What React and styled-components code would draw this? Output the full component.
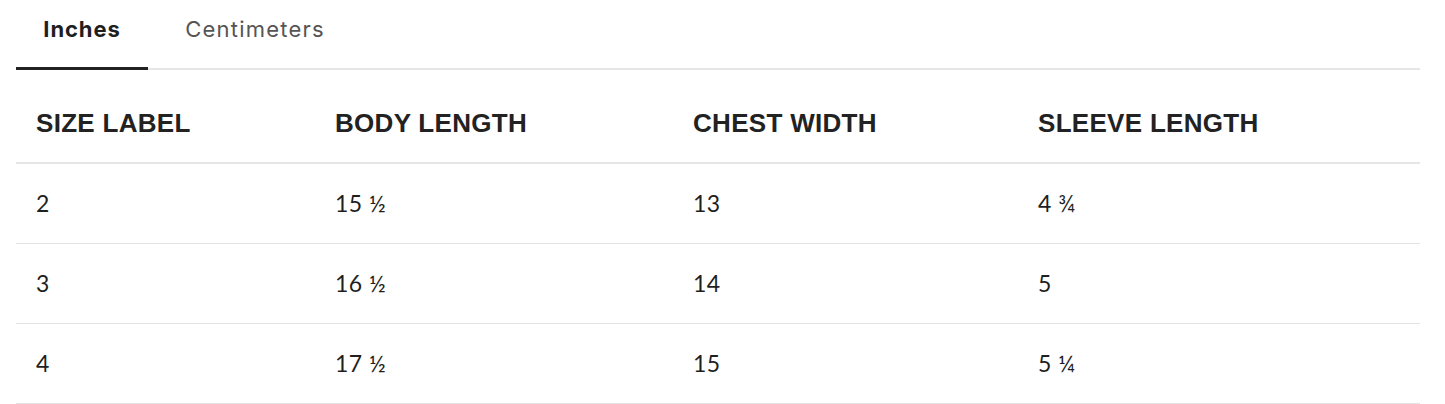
import React, { useState } from "react";
import styled, { createGlobalStyle } from "styled-components";

const GlobalStyle = createGlobalStyle`
  body {
    margin: 0;
    background: #ffffff;
    font-family: Lato, "Liberation Sans", Arial, sans-serif;
    color: #1f1f1f;
  }
`;

const Page = styled.div`
  padding: 0 25px 0 16px;
`;

const TabBar = styled.div`
  display: flex;
  border-bottom: 2px solid #e6e6e6;
`;

const Tab = styled.button`
  display: block;
  margin: 0 0 -2px;
  padding: 16px 0 25px;
  width: ${(p) => p.width}px;
  border: 0;
  border-bottom: 3px solid ${(p) => (p.active ? "#222222" : "transparent")};
  background: none;
  font-family: Inter, Lato, "Liberation Sans", Arial, sans-serif;
  font-size: 22px;
  line-height: 26px;
  letter-spacing: ${(p) => (p.active ? "0.9px" : "1.2px")};
  font-weight: ${(p) => (p.active ? 700 : 400)};
  color: ${(p) => (p.active ? "#1f1f1f" : "#555555")};
  text-align: center;
  cursor: pointer;
`;

const Table = styled.table`
  width: 100%;
  table-layout: fixed;
  border-collapse: collapse;
`;

const HeadCell = styled.th`
  padding: 38px 0 24px 20px;
  text-align: left;
  font-family: "Liberation Sans", Arial, sans-serif;
  font-size: 26px;
  line-height: 30px;
  letter-spacing: 0.3px;
  font-weight: 700;
  color: #222222;
  border-bottom: 2px solid #e6e6e6;
`;

const Cell = styled.td`
  padding: 25px 0 26px 20px;
  font-size: 23px;
  line-height: 28px;
  letter-spacing: 0.5px;
  color: #1f1f1f;
  border-bottom: 1px solid #e3e3e3;
`;

const columns = [
  { label: "SIZE LABEL", width: 299 },
  { label: "BODY LENGTH", width: 358 },
  { label: "CHEST WIDTH", width: 345 },
  { label: "SLEEVE LENGTH", width: 402 },
];

const rows = {
  in: [
    ["2", "15 ½", "13", "4 ¾"],
    ["3", "16 ½", "14", "5"],
    ["4", "17 ½", "15", "5 ¼"],
  ],
  cm: [
    ["2", "39.4", "33", "12.1"],
    ["3", "41.9", "35.6", "12.7"],
    ["4", "44.5", "38.1", "13.3"],
  ],
};

const App = () => {
  const [unit, setUnit] = useState("in");

  return (
    <Page>
      <GlobalStyle />
      <TabBar>
        <Tab width={132} active={unit === "in"} onClick={() => setUnit("in")}>
          Inches
        </Tab>
        <Tab width={214} active={unit === "cm"} onClick={() => setUnit("cm")}>
          Centimeters
        </Tab>
      </TabBar>
      <Table>
        <colgroup>
          {columns.map((c) => (
            <col key={c.label} style={{ width: c.width }} />
          ))}
        </colgroup>
        <thead>
          <tr>
            {columns.map((c) => (
              <HeadCell key={c.label}>{c.label}</HeadCell>
            ))}
          </tr>
        </thead>
        <tbody>
          {rows[unit].map((r) => (
            <tr key={r[0]}>
              {r.map((v, i) => (
                <Cell key={i}>{v}</Cell>
              ))}
            </tr>
          ))}
        </tbody>
      </Table>
    </Page>
  );
};

export default App;
